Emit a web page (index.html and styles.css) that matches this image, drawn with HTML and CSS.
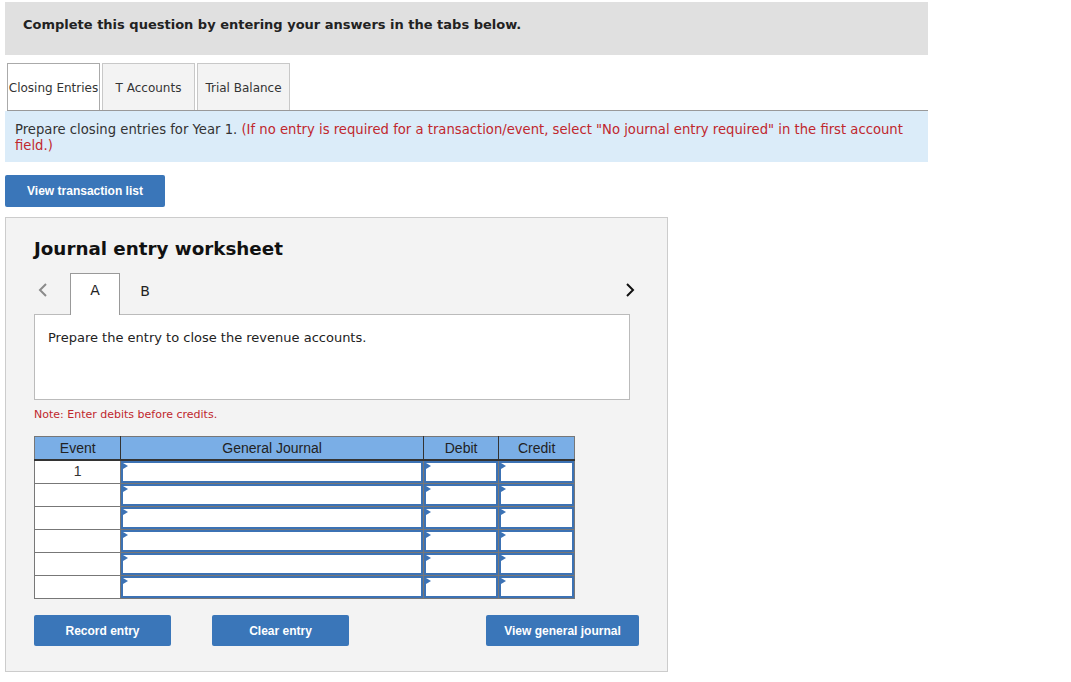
FILE: index.html
```html
<!DOCTYPE html>
<html lang="en">
<head>
    <meta charset="UTF-8">
    <meta name="viewport" content="width=device-width, initial-scale=1.0">
    <title>Closing Entries</title>
    <link rel="stylesheet" href="styles.css">
</head>
<body>
    <div class="page">

        <div class="question-bar">Complete this question by entering your answers in the tabs below.</div>

        <!-- tabs -->
        <div class="tabs">
            <div class="tab active">Closing Entries</div>
            <div class="tab">T Accounts</div>
            <div class="tab">Trial Balance</div>
        </div>

        <div class="instructions">
            Prepare closing entries for Year 1. <span class="red">(If no entry is required for a transaction/event, select "No journal entry required" in the first account</span><br>
            <span class="red">field.)</span>
        </div>

        <button class="btn btn-list">View transaction list</button>

        <!-- worksheet -->
        <div class="worksheet">
            <h2 class="ws-title">Journal entry worksheet</h2>

            <div class="ws-nav">
                <span class="chev prev">
                    <svg width="12" height="16" viewBox="0 0 12 16"><polyline points="9,2 3,8 9,14" fill="none" stroke="#8a8a8a" stroke-width="2"/></svg>
                </span>
                <div class="ws-tab active">A</div>
                <div class="ws-tab">B</div>
                <span class="chev next">
                    <svg width="12" height="16" viewBox="0 0 12 16"><polyline points="3,2 9,8 3,14" fill="none" stroke="#111" stroke-width="2"/></svg>
                </span>
            </div>

            <div class="ws-box">Prepare the entry to close the revenue accounts.</div>

            <p class="note">Note: Enter debits before credits.</p>

            <table class="journal">
                <thead>
                    <tr>
                        <th class="c-event">Event</th>
                        <th class="c-gj">General Journal</th>
                        <th class="c-amt">Debit</th>
                        <th class="c-amt">Credit</th>
                    </tr>
                </thead>
                <tbody id="rows"></tbody>
            </table>

            <div class="ws-buttons">
                <button class="btn btn-ws">Record entry</button>
                <button class="btn btn-ws btn-clear">Clear entry</button>
                <button class="btn btn-ws btn-view">View general journal</button>
            </div>
        </div>

    </div>

    <script>
        // 6 empty journal rows, only the first has an event number
        const rows = document.querySelector('#rows');
        let str = '';
        for (let i = 0; i < 6; i++) {
            const ev = i === 0 ? '1' : '';
            str += `<tr>
                <td class="c-event">${ev}</td>
                <td class="c-in"><div class="field"></div></td>
                <td class="c-in"><div class="field"></div></td>
                <td class="c-in"><div class="field"></div></td>
            </tr>`;
        }
        rows.innerHTML = str;
    </script>
</body>
</html>
```

FILE: styles.css
```css
body{
    margin: 0;
    font-family: "DejaVu Sans", Verdana, sans-serif;
    color: #222;
    background: #fff;
}
.page{
    padding: 2px 0 0 5px;
    width: 923px;
}
.question-bar{
    height: 53px;
    box-sizing: border-box;
    padding: 15px 18px 0;
    background-color: #e0e0e0;
    font-size: 13px;
    font-weight: bold;
    color: #222;
}
.tabs{
    display: flex;
    gap: 2px;
    margin-top: 8px;
    margin-left: 2px;
    border-bottom: 1px solid #999;
}
.tab{
    width: 93px;
    height: 47px;
    box-sizing: border-box;
    padding-top: 17px;
    text-align: center;
    white-space: nowrap;
    border: 1px solid #c8c8c8;
    border-bottom: none;
    background-color: #f3f3f3;
    font-size: 12px;
    color: #333;
}
.tab.active{
    background-color: #fff;
    border-color: #aaa;
}
.instructions{
    height: 51px;
    box-sizing: border-box;
    background-color: #dbecf9;
    padding: 11px 10px 0;
    font-size: 13.2px;
    line-height: 16px;
    color: #333;
    white-space: nowrap;
}
.red{
    color: #c0272d;
}
.btn{
    display: block;
    border: none;
    border-radius: 2px;
    background-color: #3a76b9;
    color: #fff;
    font-family: "Liberation Sans", Arial, sans-serif;
    font-weight: bold;
    font-size: 12px;
    cursor: pointer;
}
.btn-list{
    margin-top: 13px;
    width: 160px;
    height: 32px;
}
.worksheet{
    margin-top: 10px;
    width: 663px;
    box-sizing: border-box;
    background-color: #f3f3f3;
    border: 1px solid #ccc;
    padding: 20px 28px 25px;
}
.ws-title{
    margin: 0;
    font-size: 18.3px;
    line-height: 22px;
    color: #111;
}
.ws-nav{
    display: flex;
    align-items: flex-end;
    margin-top: 14px;
    height: 41px;
    margin-bottom: -1px;
}
.chev{
    width: 36px;
    height: 41px;
    display: flex;
    align-items: flex-start;
    padding: 8px 0 0 3px;
    box-sizing: border-box;
}
.chev.next{
    margin-left: auto;
    width: 12px;
    padding: 8px 0 0;
    margin-right: 3px;
}
.ws-tab{
    width: 50px;
    height: 41px;
    box-sizing: border-box;
    padding-top: 8px;
    text-align: center;
    font-size: 14px;
    color: #222;
    border: 1px solid transparent;
    border-bottom: none;
}
.ws-tab.active{
    background-color: #fff;
    border-color: #999;
    position: relative;
    z-index: 1;
    height: 42px;
}
.ws-box{
    width: 596px;
    height: 86px;
    box-sizing: border-box;
    border: 1px solid #bbb;
    background-color: #fff;
    padding: 15px 13px;
    font-size: 13px;
    color: #222;
}
.note{
    margin: 8px 0 15px;
    font-size: 11px;
    color: #c0272d;
}
.journal{
    border-collapse: collapse;
    width: 541px;
    font-family: "Liberation Sans", Arial, sans-serif;
    font-size: 14px;
    border: 1px solid #777;
}
.journal th{
    background-color: #7aaee6;
    font-weight: normal;
    color: #222;
    height: 22px;
    padding: 0;
    border-left: 1px solid #333;
    border-bottom: 2px solid #333;
}
.journal th:first-child{
    border-left: none;
}
.c-event{ width: 86px; }
.c-gj{ width: 304px; }
.c-amt{ width: 75px; }
.journal td{
    padding: 0;
    height: 22px;
    border: 1px solid #777;
    background-color: #fff;
}
.journal td.c-event{
    text-align: center;
    vertical-align: top;
    padding-top: 2px;
    color: #333;
    font-size: 14px;
    height: 20px;
}
.field{
    position: relative;
    height: 22px;
    box-sizing: border-box;
    border: 2px solid #3c72b4;
    background-color: #fff;
}
.field::before{
    content: '';
    position: absolute;
    left: 0;
    top: 0;
    border-left: 5px solid #3c72b4;
    border-top: 3px solid transparent;
    border-bottom: 3px solid transparent;
}
.ws-buttons{
    display: flex;
    margin-top: 16px;
}
.btn-ws{
    width: 137px;
    height: 31px;
}
.btn-clear{
    margin-left: 41px;
}
.btn-view{
    margin-left: 137px;
    width: 153px;
}
```
